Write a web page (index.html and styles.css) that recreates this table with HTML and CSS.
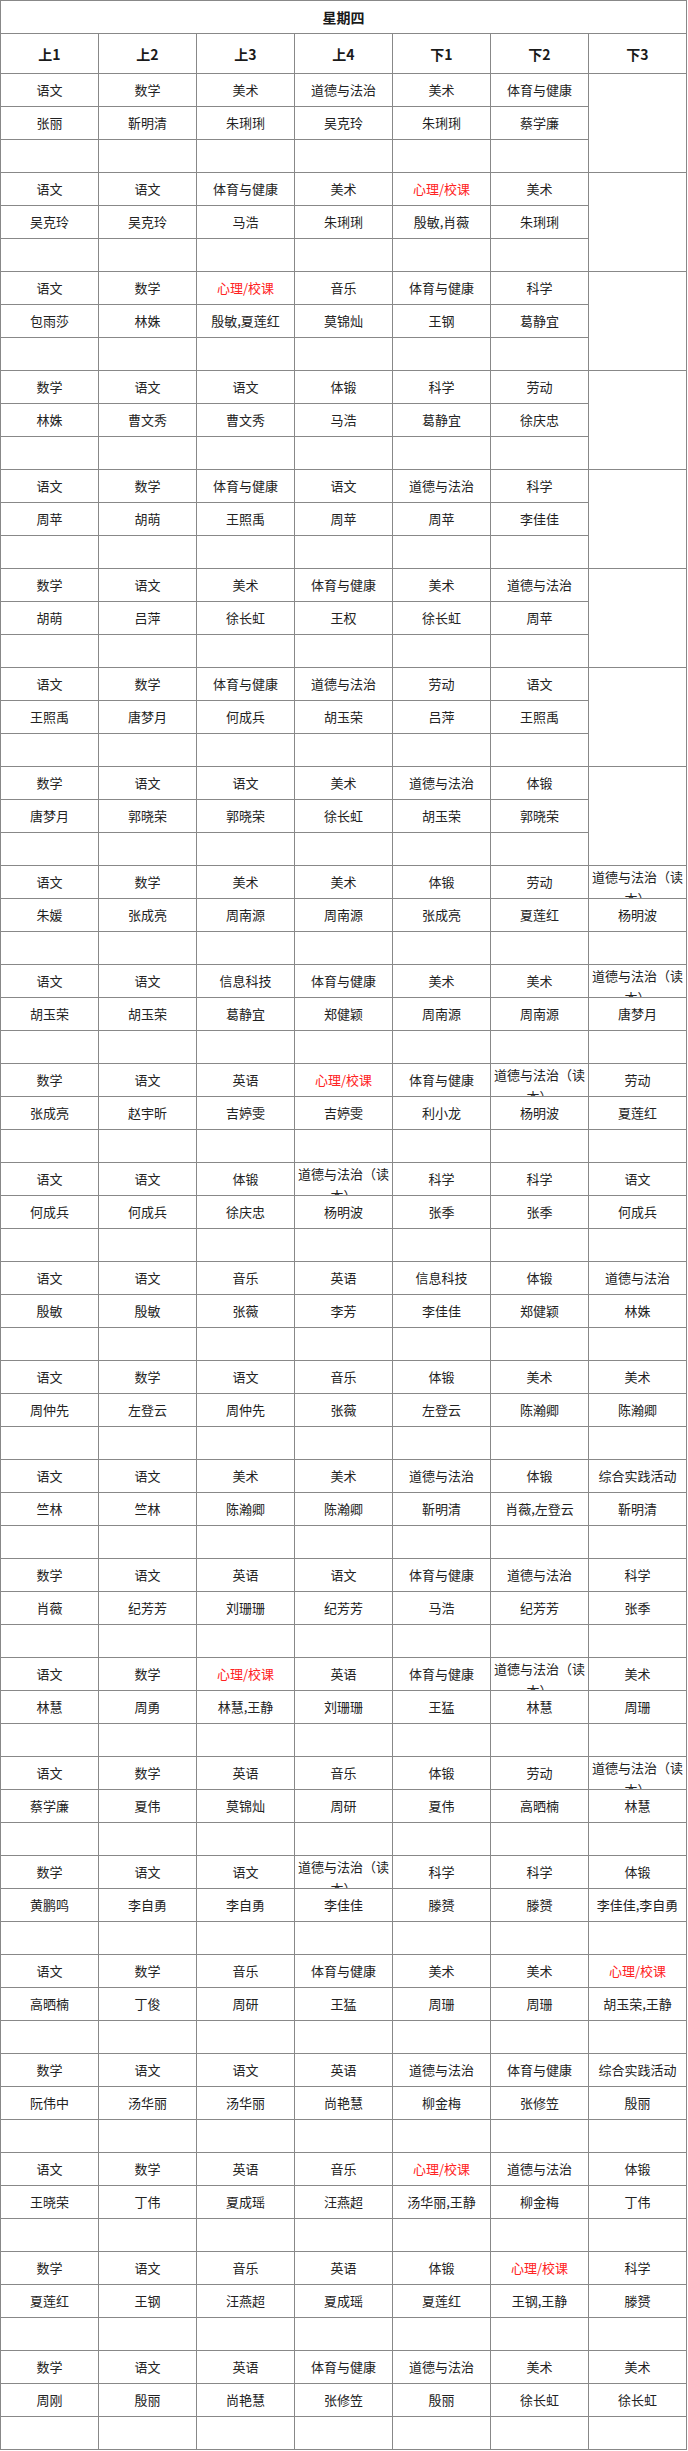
FILE: index.html
```html
<!DOCTYPE html>
<html lang="zh-CN">
<head>
<meta charset="utf-8">
<title>星期四</title>
<link rel="stylesheet" href="styles.css">
</head>
<body>
<table class="schedule">
<colgroup><col><col><col><col><col><col><col></colgroup>
<tr class="title-row"><th class="title" colspan="7">星期四</th></tr>
<tr class="head-row"><th>上1</th><th>上2</th><th>上3</th><th>上4</th><th>下1</th><th>下2</th><th>下3</th></tr>

<tr class="row"><td><div class="c">语文</div></td><td><div class="c">数学</div></td><td><div class="c">美术</div></td><td><div class="c">道德与法治</div></td><td><div class="c">美术</div></td><td><div class="c">体育与健康</div></td><td rowspan="3"></td></tr>
<tr class="row"><td><div class="c">张丽</div></td><td><div class="c">靳明清</div></td><td><div class="c">朱琍琍</div></td><td><div class="c">吴克玲</div></td><td><div class="c">朱琍琍</div></td><td><div class="c">蔡学廉</div></td></tr>
<tr class="row"><td></td><td></td><td></td><td></td><td></td><td></td></tr>

<tr class="row"><td><div class="c">语文</div></td><td><div class="c">语文</div></td><td><div class="c">体育与健康</div></td><td><div class="c">美术</div></td><td><div class="c red">心理/校课</div></td><td><div class="c">美术</div></td><td rowspan="3"></td></tr>
<tr class="row"><td><div class="c">吴克玲</div></td><td><div class="c">吴克玲</div></td><td><div class="c">马浩</div></td><td><div class="c">朱琍琍</div></td><td><div class="c">殷敏,肖薇</div></td><td><div class="c">朱琍琍</div></td></tr>
<tr class="row"><td></td><td></td><td></td><td></td><td></td><td></td></tr>

<tr class="row"><td><div class="c">语文</div></td><td><div class="c">数学</div></td><td><div class="c red">心理/校课</div></td><td><div class="c">音乐</div></td><td><div class="c">体育与健康</div></td><td><div class="c">科学</div></td><td rowspan="3"></td></tr>
<tr class="row"><td><div class="c">包雨莎</div></td><td><div class="c">林姝</div></td><td><div class="c">殷敏,夏莲红</div></td><td><div class="c">莫锦灿</div></td><td><div class="c">王钢</div></td><td><div class="c">葛静宜</div></td></tr>
<tr class="row"><td></td><td></td><td></td><td></td><td></td><td></td></tr>

<tr class="row"><td><div class="c">数学</div></td><td><div class="c">语文</div></td><td><div class="c">语文</div></td><td><div class="c">体锻</div></td><td><div class="c">科学</div></td><td><div class="c">劳动</div></td><td rowspan="3"></td></tr>
<tr class="row"><td><div class="c">林姝</div></td><td><div class="c">曹文秀</div></td><td><div class="c">曹文秀</div></td><td><div class="c">马浩</div></td><td><div class="c">葛静宜</div></td><td><div class="c">徐庆忠</div></td></tr>
<tr class="row"><td></td><td></td><td></td><td></td><td></td><td></td></tr>

<tr class="row"><td><div class="c">语文</div></td><td><div class="c">数学</div></td><td><div class="c">体育与健康</div></td><td><div class="c">语文</div></td><td><div class="c">道德与法治</div></td><td><div class="c">科学</div></td><td rowspan="3"></td></tr>
<tr class="row"><td><div class="c">周苹</div></td><td><div class="c">胡萌</div></td><td><div class="c">王照禹</div></td><td><div class="c">周苹</div></td><td><div class="c">周苹</div></td><td><div class="c">李佳佳</div></td></tr>
<tr class="row"><td></td><td></td><td></td><td></td><td></td><td></td></tr>

<tr class="row"><td><div class="c">数学</div></td><td><div class="c">语文</div></td><td><div class="c">美术</div></td><td><div class="c">体育与健康</div></td><td><div class="c">美术</div></td><td><div class="c">道德与法治</div></td><td rowspan="3"></td></tr>
<tr class="row"><td><div class="c">胡萌</div></td><td><div class="c">吕萍</div></td><td><div class="c">徐长虹</div></td><td><div class="c">王权</div></td><td><div class="c">徐长虹</div></td><td><div class="c">周苹</div></td></tr>
<tr class="row"><td></td><td></td><td></td><td></td><td></td><td></td></tr>

<tr class="row"><td><div class="c">语文</div></td><td><div class="c">数学</div></td><td><div class="c">体育与健康</div></td><td><div class="c">道德与法治</div></td><td><div class="c">劳动</div></td><td><div class="c">语文</div></td><td rowspan="3"></td></tr>
<tr class="row"><td><div class="c">王照禹</div></td><td><div class="c">唐梦月</div></td><td><div class="c">何成兵</div></td><td><div class="c">胡玉荣</div></td><td><div class="c">吕萍</div></td><td><div class="c">王照禹</div></td></tr>
<tr class="row"><td></td><td></td><td></td><td></td><td></td><td></td></tr>

<tr class="row"><td><div class="c">数学</div></td><td><div class="c">语文</div></td><td><div class="c">语文</div></td><td><div class="c">美术</div></td><td><div class="c">道德与法治</div></td><td><div class="c">体锻</div></td><td rowspan="3"></td></tr>
<tr class="row"><td><div class="c">唐梦月</div></td><td><div class="c">郭晓荣</div></td><td><div class="c">郭晓荣</div></td><td><div class="c">徐长虹</div></td><td><div class="c">胡玉荣</div></td><td><div class="c">郭晓荣</div></td></tr>
<tr class="row"><td></td><td></td><td></td><td></td><td></td><td></td></tr>

<tr class="row"><td><div class="c">语文</div></td><td><div class="c">数学</div></td><td><div class="c">美术</div></td><td><div class="c">美术</div></td><td><div class="c">体锻</div></td><td><div class="c">劳动</div></td><td><div class="c">道德与法治（读本）</div></td></tr>
<tr class="row"><td><div class="c">朱媛</div></td><td><div class="c">张成亮</div></td><td><div class="c">周南源</div></td><td><div class="c">周南源</div></td><td><div class="c">张成亮</div></td><td><div class="c">夏莲红</div></td><td><div class="c">杨明波</div></td></tr>
<tr class="row"><td></td><td></td><td></td><td></td><td></td><td></td><td></td></tr>

<tr class="row"><td><div class="c">语文</div></td><td><div class="c">语文</div></td><td><div class="c">信息科技</div></td><td><div class="c">体育与健康</div></td><td><div class="c">美术</div></td><td><div class="c">美术</div></td><td><div class="c">道德与法治（读本）</div></td></tr>
<tr class="row"><td><div class="c">胡玉荣</div></td><td><div class="c">胡玉荣</div></td><td><div class="c">葛静宜</div></td><td><div class="c">郑健颖</div></td><td><div class="c">周南源</div></td><td><div class="c">周南源</div></td><td><div class="c">唐梦月</div></td></tr>
<tr class="row"><td></td><td></td><td></td><td></td><td></td><td></td><td></td></tr>

<tr class="row"><td><div class="c">数学</div></td><td><div class="c">语文</div></td><td><div class="c">英语</div></td><td><div class="c red">心理/校课</div></td><td><div class="c">体育与健康</div></td><td><div class="c">道德与法治（读本）</div></td><td><div class="c">劳动</div></td></tr>
<tr class="row"><td><div class="c">张成亮</div></td><td><div class="c">赵宇昕</div></td><td><div class="c">吉婷雯</div></td><td><div class="c">吉婷雯</div></td><td><div class="c">利小龙</div></td><td><div class="c">杨明波</div></td><td><div class="c">夏莲红</div></td></tr>
<tr class="row"><td></td><td></td><td></td><td></td><td></td><td></td><td></td></tr>

<tr class="row"><td><div class="c">语文</div></td><td><div class="c">语文</div></td><td><div class="c">体锻</div></td><td><div class="c">道德与法治（读本）</div></td><td><div class="c">科学</div></td><td><div class="c">科学</div></td><td><div class="c">语文</div></td></tr>
<tr class="row"><td><div class="c">何成兵</div></td><td><div class="c">何成兵</div></td><td><div class="c">徐庆忠</div></td><td><div class="c">杨明波</div></td><td><div class="c">张季</div></td><td><div class="c">张季</div></td><td><div class="c">何成兵</div></td></tr>
<tr class="row"><td></td><td></td><td></td><td></td><td></td><td></td><td></td></tr>

<tr class="row"><td><div class="c">语文</div></td><td><div class="c">语文</div></td><td><div class="c">音乐</div></td><td><div class="c">英语</div></td><td><div class="c">信息科技</div></td><td><div class="c">体锻</div></td><td><div class="c">道德与法治</div></td></tr>
<tr class="row"><td><div class="c">殷敏</div></td><td><div class="c">殷敏</div></td><td><div class="c">张薇</div></td><td><div class="c">李芳</div></td><td><div class="c">李佳佳</div></td><td><div class="c">郑健颖</div></td><td><div class="c">林姝</div></td></tr>
<tr class="row"><td></td><td></td><td></td><td></td><td></td><td></td><td></td></tr>

<tr class="row"><td><div class="c">语文</div></td><td><div class="c">数学</div></td><td><div class="c">语文</div></td><td><div class="c">音乐</div></td><td><div class="c">体锻</div></td><td><div class="c">美术</div></td><td><div class="c">美术</div></td></tr>
<tr class="row"><td><div class="c">周仲先</div></td><td><div class="c">左登云</div></td><td><div class="c">周仲先</div></td><td><div class="c">张薇</div></td><td><div class="c">左登云</div></td><td><div class="c">陈瀚卿</div></td><td><div class="c">陈瀚卿</div></td></tr>
<tr class="row"><td></td><td></td><td></td><td></td><td></td><td></td><td></td></tr>

<tr class="row"><td><div class="c">语文</div></td><td><div class="c">语文</div></td><td><div class="c">美术</div></td><td><div class="c">美术</div></td><td><div class="c">道德与法治</div></td><td><div class="c">体锻</div></td><td><div class="c">综合实践活动</div></td></tr>
<tr class="row"><td><div class="c">竺林</div></td><td><div class="c">竺林</div></td><td><div class="c">陈瀚卿</div></td><td><div class="c">陈瀚卿</div></td><td><div class="c">靳明清</div></td><td><div class="c">肖薇,左登云</div></td><td><div class="c">靳明清</div></td></tr>
<tr class="row"><td></td><td></td><td></td><td></td><td></td><td></td><td></td></tr>

<tr class="row"><td><div class="c">数学</div></td><td><div class="c">语文</div></td><td><div class="c">英语</div></td><td><div class="c">语文</div></td><td><div class="c">体育与健康</div></td><td><div class="c">道德与法治</div></td><td><div class="c">科学</div></td></tr>
<tr class="row"><td><div class="c">肖薇</div></td><td><div class="c">纪芳芳</div></td><td><div class="c">刘珊珊</div></td><td><div class="c">纪芳芳</div></td><td><div class="c">马浩</div></td><td><div class="c">纪芳芳</div></td><td><div class="c">张季</div></td></tr>
<tr class="row"><td></td><td></td><td></td><td></td><td></td><td></td><td></td></tr>

<tr class="row"><td><div class="c">语文</div></td><td><div class="c">数学</div></td><td><div class="c red">心理/校课</div></td><td><div class="c">英语</div></td><td><div class="c">体育与健康</div></td><td><div class="c">道德与法治（读本）</div></td><td><div class="c">美术</div></td></tr>
<tr class="row"><td><div class="c">林慧</div></td><td><div class="c">周勇</div></td><td><div class="c">林慧,王静</div></td><td><div class="c">刘珊珊</div></td><td><div class="c">王猛</div></td><td><div class="c">林慧</div></td><td><div class="c">周珊</div></td></tr>
<tr class="row"><td></td><td></td><td></td><td></td><td></td><td></td><td></td></tr>

<tr class="row"><td><div class="c">语文</div></td><td><div class="c">数学</div></td><td><div class="c">英语</div></td><td><div class="c">音乐</div></td><td><div class="c">体锻</div></td><td><div class="c">劳动</div></td><td><div class="c">道德与法治（读本）</div></td></tr>
<tr class="row"><td><div class="c">蔡学廉</div></td><td><div class="c">夏伟</div></td><td><div class="c">莫锦灿</div></td><td><div class="c">周研</div></td><td><div class="c">夏伟</div></td><td><div class="c">高晒楠</div></td><td><div class="c">林慧</div></td></tr>
<tr class="row"><td></td><td></td><td></td><td></td><td></td><td></td><td></td></tr>

<tr class="row"><td><div class="c">数学</div></td><td><div class="c">语文</div></td><td><div class="c">语文</div></td><td><div class="c">道德与法治（读本）</div></td><td><div class="c">科学</div></td><td><div class="c">科学</div></td><td><div class="c">体锻</div></td></tr>
<tr class="row"><td><div class="c">黄鹏鸣</div></td><td><div class="c">李自勇</div></td><td><div class="c">李自勇</div></td><td><div class="c">李佳佳</div></td><td><div class="c">滕赟</div></td><td><div class="c">滕赟</div></td><td><div class="c">李佳佳,李自勇</div></td></tr>
<tr class="row"><td></td><td></td><td></td><td></td><td></td><td></td><td></td></tr>

<tr class="row"><td><div class="c">语文</div></td><td><div class="c">数学</div></td><td><div class="c">音乐</div></td><td><div class="c">体育与健康</div></td><td><div class="c">美术</div></td><td><div class="c">美术</div></td><td><div class="c red">心理/校课</div></td></tr>
<tr class="row"><td><div class="c">高晒楠</div></td><td><div class="c">丁俊</div></td><td><div class="c">周研</div></td><td><div class="c">王猛</div></td><td><div class="c">周珊</div></td><td><div class="c">周珊</div></td><td><div class="c">胡玉荣,王静</div></td></tr>
<tr class="row"><td></td><td></td><td></td><td></td><td></td><td></td><td></td></tr>

<tr class="row"><td><div class="c">数学</div></td><td><div class="c">语文</div></td><td><div class="c">语文</div></td><td><div class="c">英语</div></td><td><div class="c">道德与法治</div></td><td><div class="c">体育与健康</div></td><td><div class="c">综合实践活动</div></td></tr>
<tr class="row"><td><div class="c">阮伟中</div></td><td><div class="c">汤华丽</div></td><td><div class="c">汤华丽</div></td><td><div class="c">尚艳慧</div></td><td><div class="c">柳金梅</div></td><td><div class="c">张修笠</div></td><td><div class="c">殷丽</div></td></tr>
<tr class="row"><td></td><td></td><td></td><td></td><td></td><td></td><td></td></tr>

<tr class="row"><td><div class="c">语文</div></td><td><div class="c">数学</div></td><td><div class="c">英语</div></td><td><div class="c">音乐</div></td><td><div class="c red">心理/校课</div></td><td><div class="c">道德与法治</div></td><td><div class="c">体锻</div></td></tr>
<tr class="row"><td><div class="c">王晓荣</div></td><td><div class="c">丁伟</div></td><td><div class="c">夏成瑶</div></td><td><div class="c">汪燕超</div></td><td><div class="c">汤华丽,王静</div></td><td><div class="c">柳金梅</div></td><td><div class="c">丁伟</div></td></tr>
<tr class="row"><td></td><td></td><td></td><td></td><td></td><td></td><td></td></tr>

<tr class="row"><td><div class="c">数学</div></td><td><div class="c">语文</div></td><td><div class="c">音乐</div></td><td><div class="c">英语</div></td><td><div class="c">体锻</div></td><td><div class="c red">心理/校课</div></td><td><div class="c">科学</div></td></tr>
<tr class="row"><td><div class="c">夏莲红</div></td><td><div class="c">王钢</div></td><td><div class="c">汪燕超</div></td><td><div class="c">夏成瑶</div></td><td><div class="c">夏莲红</div></td><td><div class="c">王钢,王静</div></td><td><div class="c">滕赟</div></td></tr>
<tr class="row"><td></td><td></td><td></td><td></td><td></td><td></td><td></td></tr>

<tr class="row"><td><div class="c">数学</div></td><td><div class="c">语文</div></td><td><div class="c">英语</div></td><td><div class="c">体育与健康</div></td><td><div class="c">道德与法治</div></td><td><div class="c">美术</div></td><td><div class="c">美术</div></td></tr>
<tr class="row"><td><div class="c">周刚</div></td><td><div class="c">殷丽</div></td><td><div class="c">尚艳慧</div></td><td><div class="c">张修笠</div></td><td><div class="c">殷丽</div></td><td><div class="c">徐长虹</div></td><td><div class="c">徐长虹</div></td></tr>
<tr class="row"><td></td><td></td><td></td><td></td><td></td><td></td><td></td></tr>
</table>
</body>
</html>
```

FILE: styles.css
```css
html, body {
  margin: 0;
  padding: 0;
  background: #fff;
}

body {
  font-family: "Noto Sans CJK SC", "Microsoft YaHei", sans-serif;
  color: #222;
}

.schedule {
  border-collapse: collapse;
  table-layout: fixed;
  width: 687px;
  font-size: 13px;
}

.schedule th,
.schedule td {
  border: 1px solid #888;
  padding: 0 2px;
  text-align: center;
  vertical-align: middle;
}

.schedule th {
  font-size: 14px;
  font-weight: bold;
  color: #1a1a1a;
}

.title-row {
  height: 33px;
}

.head-row {
  height: 40px;
}

.row {
  height: 33px;
}

.c {
  max-height: 32px;
  overflow: hidden;
  line-height: 22px;
}

.red {
  color: #ff2222;
}
```
